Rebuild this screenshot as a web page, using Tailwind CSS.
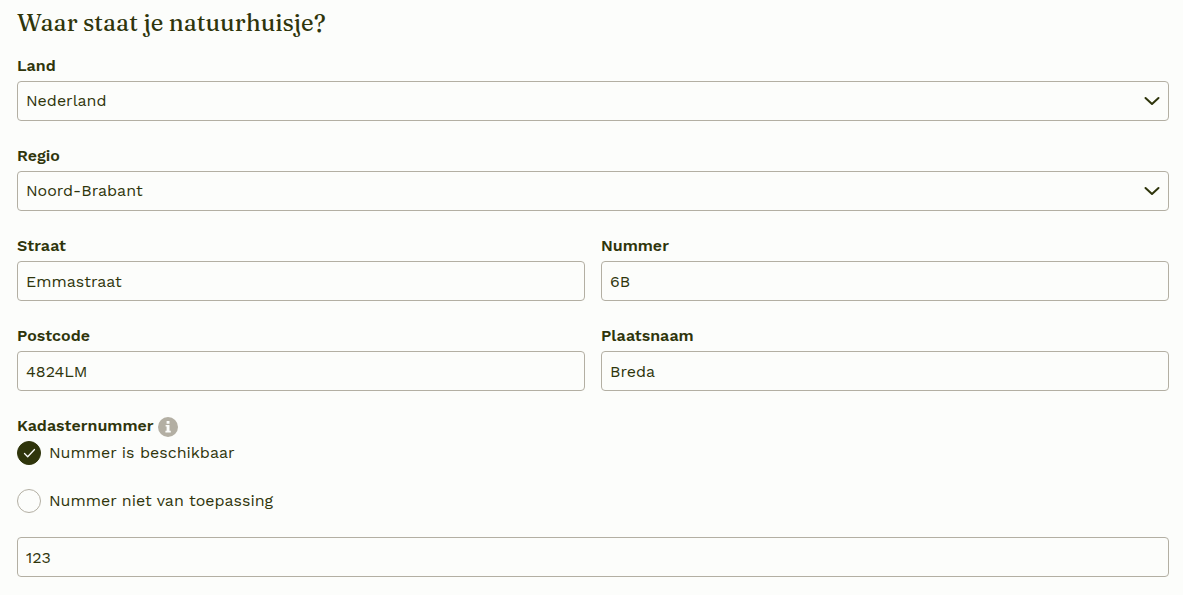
<!DOCTYPE html>
<html lang="nl">
<head>
  <meta charset="UTF-8">
  <title>Waar staat je natuurhuisje?</title>
  <meta name="viewport" content="width=device-width, initial-scale=1.0">
  <script src="https://cdn.jsdelivr.net/npm/@tailwindcss/browser@4"></script>
</head>
<body class="bg-[#fcfdfb] text-[#2f350b] font-['Work_Sans','Inter',sans-serif] text-base min-h-screen">

<form class="pl-[17px] pr-[14px] pt-[7px] pb-4">

  <h1 class="font-['Fraunces','Liberation_Serif',serif] font-medium text-2xl leading-8 mb-[15px]">Waar staat je natuurhuisje?</h1>

  <!-- Address -->
  <div class="grid grid-cols-2 gap-x-4 gap-y-[23px]">
    <div class="col-span-2">
      <label for="country" class="block font-semibold leading-6 mb-[3px]">Land</label>
      <div class="relative">
        <select id="country" class="block w-full h-10 appearance-none rounded border border-[#b3afa3] bg-transparent pl-2 pr-10">
          <option>Nederland</option>
        </select>
        <svg class="absolute right-[9px] top-3 size-4 pointer-events-none" viewBox="0 0 16 16" fill="none" stroke="currentColor" stroke-width="2" stroke-linecap="round" stroke-linejoin="round" aria-hidden="true"><path d="M1.5 5L8 11L14.5 5"/></svg>
      </div>
    </div>

    <div class="col-span-2">
      <label for="region" class="block font-semibold leading-6 mb-[3px]">Regio</label>
      <div class="relative">
        <select id="region" class="block w-full h-10 appearance-none rounded border border-[#b3afa3] bg-transparent pl-2 pr-10">
          <option>Noord-Brabant</option>
        </select>
        <svg class="absolute right-[9px] top-3 size-4 pointer-events-none" viewBox="0 0 16 16" fill="none" stroke="currentColor" stroke-width="2" stroke-linecap="round" stroke-linejoin="round" aria-hidden="true"><path d="M1.5 5L8 11L14.5 5"/></svg>
      </div>
    </div>

    <div>
      <label for="street" class="block font-semibold leading-6 mb-[3px]">Straat</label>
      <input id="street" type="text" value="Emmastraat" class="block w-full h-10 rounded border border-[#b3afa3] px-2">
    </div>
    <div>
      <label for="number" class="block font-semibold leading-6 mb-[3px]">Nummer</label>
      <input id="number" type="text" value="6B" class="block w-full h-10 rounded border border-[#b3afa3] px-2">
    </div>
    <div>
      <label for="postcode" class="block font-semibold leading-6 mb-[3px]">Postcode</label>
      <input id="postcode" type="text" value="4824LM" class="block w-full h-10 rounded border border-[#b3afa3] px-2">
    </div>
    <div>
      <label for="city" class="block font-semibold leading-6 mb-[3px]">Plaatsnaam</label>
      <input id="city" type="text" value="Breda" class="block w-full h-10 rounded border border-[#b3afa3] px-2">
    </div>
  </div>

  <!-- Land registry number -->
  <div class="mt-[23px]">
    <div class="flex items-end gap-1 mb-[3px]">
      <label for="registry" class="font-semibold leading-6">Kadasternummer</label>
      <button type="button" aria-label="Meer informatie" class="rounded-full pb-px">
        <svg class="block size-5" viewBox="0 0 20 20" aria-hidden="true">
          <circle cx="10" cy="10" r="10" fill="#b3afa3"/>
          <path fill="#fcfdfb" d="M8.6 4h2.900v2.700H8.600zM7.600 7.900h3.900v5.800h1.300v1.700H7.400v-1.700h1.200V9.600h-1z"/>
        </svg>
      </button>
    </div>

    <div class="flex flex-col items-start gap-6 mb-6">
      <label class="relative flex items-center gap-2 leading-6">
        <input type="radio" name="registry-status" checked class="peer size-6 appearance-none rounded-full border border-[#b3afa3] checked:border-[#2f350b] checked:bg-[#2f350b]">
        <svg class="absolute left-0 top-0 size-6 hidden peer-checked:block pointer-events-none" viewBox="0 0 24 24" fill="none" stroke="#fcfdfb" stroke-width="1.3" stroke-linecap="round" stroke-linejoin="round" aria-hidden="true"><path d="M7.500 12.500L10.700 15.700L17.500 8.500"/></svg>
        <span>Nummer is beschikbaar</span>
      </label>
      <label class="relative flex items-center gap-2 leading-6">
        <input type="radio" name="registry-status" class="peer size-6 appearance-none rounded-full border border-[#b3afa3] checked:border-[#2f350b] checked:bg-[#2f350b]">
        <svg class="absolute left-0 top-0 size-6 hidden peer-checked:block pointer-events-none" viewBox="0 0 24 24" fill="none" stroke="#fcfdfb" stroke-width="1.3" stroke-linecap="round" stroke-linejoin="round" aria-hidden="true"><path d="M7.500 12.500L10.700 15.700L17.500 8.500"/></svg>
        <span>Nummer niet van toepassing</span>
      </label>
    </div>

    <input id="registry" type="text" value="123" class="block w-full h-10 rounded border border-[#b3afa3] px-2">
  </div>

</form>

</body>
</html>
